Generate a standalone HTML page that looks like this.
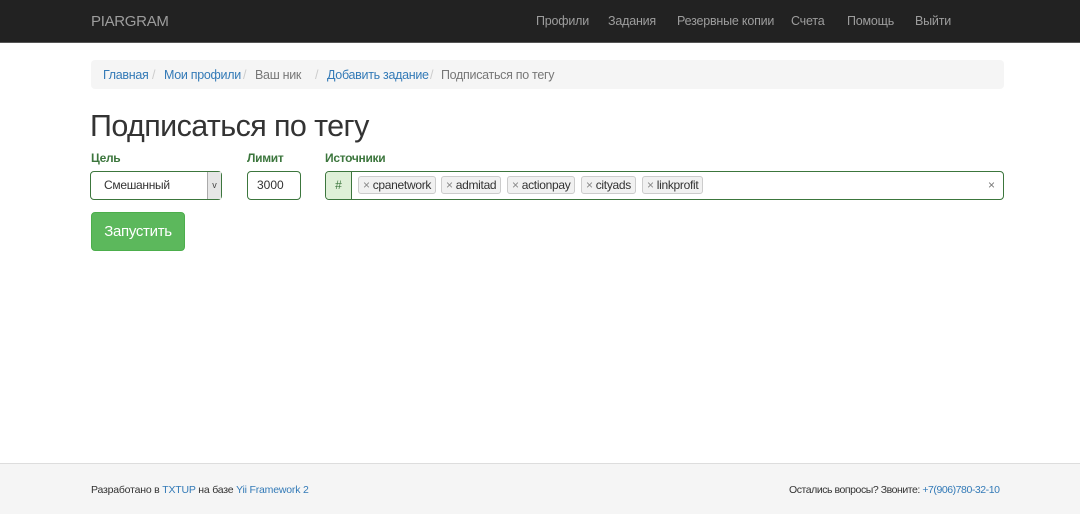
<!DOCTYPE html>
<html><head><meta charset="utf-8"><style>
*{box-sizing:border-box;margin:0;padding:0}
body{width:1080px;height:514px;position:relative;background:#fff;font-family:"Liberation Sans",sans-serif;color:#333;overflow:hidden}
.a{position:absolute;white-space:nowrap}
.nav{position:absolute;left:0;top:0;width:1080px;height:43px;background:#222;border-bottom:1px solid #555}
.nl{color:#9d9d9d;font-size:12.5px;top:14px;letter-spacing:-0.2px}
.bc{position:absolute;left:91px;top:60px;width:913px;height:29px;background:#f5f5f5;border-radius:4px}
.b{font-size:12.5px;top:68px;letter-spacing:-0.3px}
.lk{color:#337ab7}.sep{color:#ccc}
.lab{font-size:12px;font-weight:bold;color:#3c763d;top:151px;letter-spacing:-0.3px}
.box{position:absolute;border:1px solid #3c763d;border-radius:4px;background:#fff}
.tag{position:absolute;top:176px;height:18px;border:1px solid #ccc;border-radius:3px;background:#f1f1f1;font-size:12px;line-height:16px;padding:0 4px;color:#333;letter-spacing:-0.3px}
.tag b{font-weight:normal;color:#888;margin-right:3px}
.foot{position:absolute;left:0;top:463px;width:1080px;height:51px;background:#f5f5f5;border-top:1px solid #ddd}
.f{font-size:10.5px;top:484px;letter-spacing:-0.2px}
</style></head><body>
<div class="nav"></div>
<div class="a" style="left:91px;top:13px;color:#9d9d9d;font-size:15px;letter-spacing:-0.3px">PIARGRAM</div>
<div class="a nl" style="left:536px">Профили</div>
<div class="a nl" style="left:608px">Задания</div>
<div class="a nl" style="left:677px">Резервные копии</div>
<div class="a nl" style="left:791px">Счета</div>
<div class="a nl" style="left:847px">Помощь</div>
<div class="a nl" style="left:915px">Выйти</div>
<div class="bc"></div>
<div class="a b" style="left:103px"><span class="lk">Главная</span></div>
<div class="a b sep" style="left:152px">/</div>
<div class="a b lk" style="left:164px">Мои профили</div>
<div class="a b sep" style="left:243px">/</div>
<div class="a b" style="left:255px;color:#777">Ваш ник</div>
<div class="a b sep" style="left:315px">/</div>
<div class="a b lk" style="left:327px">Добавить задание</div>
<div class="a b sep" style="left:430px">/</div>
<div class="a b" style="left:441px;color:#777">Подписаться по тегу</div>
<div class="a" style="left:90px;top:109px;font-size:30.5px;color:#333;letter-spacing:-0.6px">Подписаться по тегу</div>
<div class="a lab" style="left:91px">Цель</div>
<div class="a lab" style="left:247px">Лимит</div>
<div class="a lab" style="left:325px">Источники</div>
<div class="box" style="left:90px;top:171px;width:132px;height:29px"></div>
<div class="a" style="left:104px;top:178px;font-size:12px;letter-spacing:-0.3px">Смешанный</div>
<div class="a" style="left:207px;top:172px;width:14px;height:27px;background:#e6e6e6;border-left:1px solid #aaa;font-size:9px;text-align:center;line-height:26px;color:#444">v</div>
<div class="box" style="left:247px;top:171px;width:54px;height:29px"></div>
<div class="a" style="left:257px;top:178px;font-size:12px">3000</div>
<div class="box" style="left:325px;top:171px;width:679px;height:29px"></div>
<div class="a" style="left:326px;top:172px;width:26px;height:27px;background:#dff0d8;border-right:1px solid #3c763d;border-radius:3px 0 0 3px;color:#3c763d;font-size:12px;text-align:center;line-height:27px">#</div>
<div class="tag" style="left:358px"><b>×</b>cpanetwork</div>
<div class="tag" style="left:441px"><b>×</b>admitad</div>
<div class="tag" style="left:507px"><b>×</b>actionpay</div>
<div class="tag" style="left:581px"><b>×</b>cityads</div>
<div class="tag" style="left:642px"><b>×</b>linkprofit</div>
<div class="a" style="left:988px;top:178px;font-size:12px;color:#777">×</div>
<div class="a" style="left:91px;top:212px;width:94px;height:39px;background:#5cb85c;border:1px solid #4cae4c;border-radius:4px;color:#fff;font-size:15px;line-height:37px;text-align:center;letter-spacing:-0.3px">Запустить</div>
<div class="foot"></div>
<div class="a f" style="left:91px">Разработано в <span class="lk">TXTUP</span> на базе <span class="lk">Yii Framework 2</span></div>
<div class="a f" style="left:789px;letter-spacing:-0.45px">Остались вопросы? Звоните: <span class="lk">+7(906)780-32-10</span></div>
</body></html>
